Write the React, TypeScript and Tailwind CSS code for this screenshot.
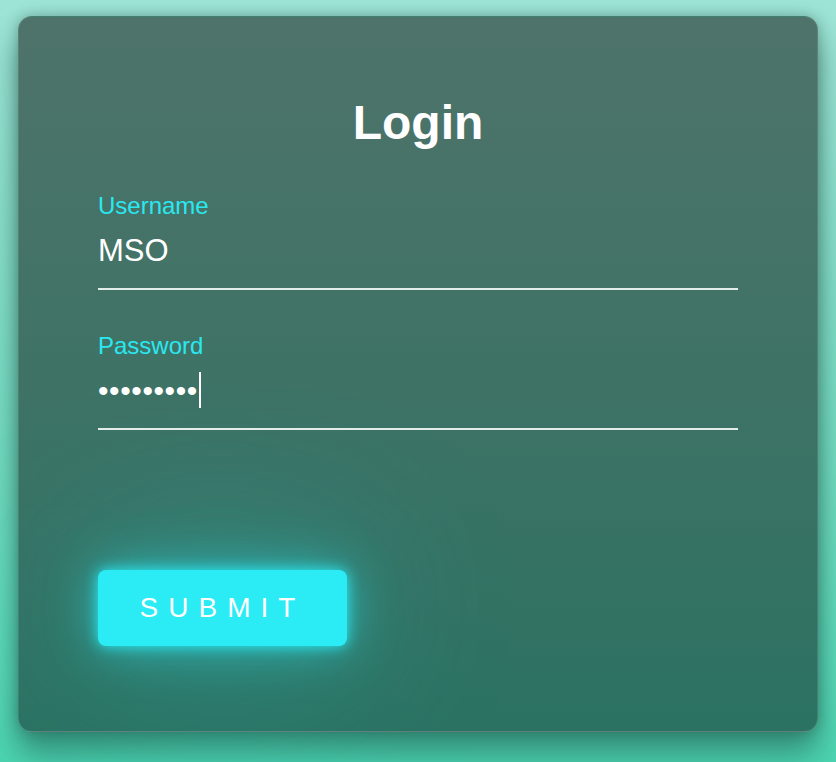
import React from 'react'

const FONT = "font-['Liberation_Sans','Helvetica','Arial',sans-serif]"

function Field({ label, children }: { label: string; children: React.ReactNode }) {
  return (
    <div className="flex flex-col">
      <label className="text-[24px] leading-none text-[#2ae8f0]">{label}</label>
      <div className="mt-[17px] h-[55px] pb-[22px] border-b-2 border-[#e4ecea] text-[31px] leading-none text-white">
        {children}
      </div>
    </div>
  )
}

export default function App() {
  return (
    <div className={`min-h-screen w-full bg-gradient-to-b from-[#9ee4d6] to-[#4cd5b2] pt-[16px] pl-[18px] ${FONT}`}>
      <div className="w-[800px] h-[716px] rounded-[14px] border border-white/10 bg-gradient-to-b from-[#4e736a] to-[#2b7262] shadow-[0_22px_30px_rgba(20,60,50,0.45),0_0_14px_rgba(20,60,50,0.35)] px-[79px] pt-[82px]">
        <h1 className="text-center text-[48px] leading-none font-bold text-white">Login</h1>

        <div className="mt-[47px] flex flex-col gap-[44px]">
          <Field label="Username">MSO</Field>
          <Field label="Password">
            <span className="flex h-[31px] items-center text-[30px]">
              <span className="tracking-[0.6px]">•••••••••</span>
              <span className="-my-[4px] ml-[1px] h-[36px] w-[2px] translate-y-[-1px] bg-white" />
            </span>
          </Field>
        </div>

        <button className="mt-[140px] flex h-[76px] w-[249px] items-center justify-center rounded-[8px] bg-[#2bebf5] text-[28px] leading-none tracking-[10px] text-white shadow-[0_0_14px_#2bebf5,0_0_50px_rgba(43,235,245,0.6),0_0_170px_rgba(43,235,245,0.4)]">
          SUBMIT
        </button>
      </div>
    </div>
  )
}
